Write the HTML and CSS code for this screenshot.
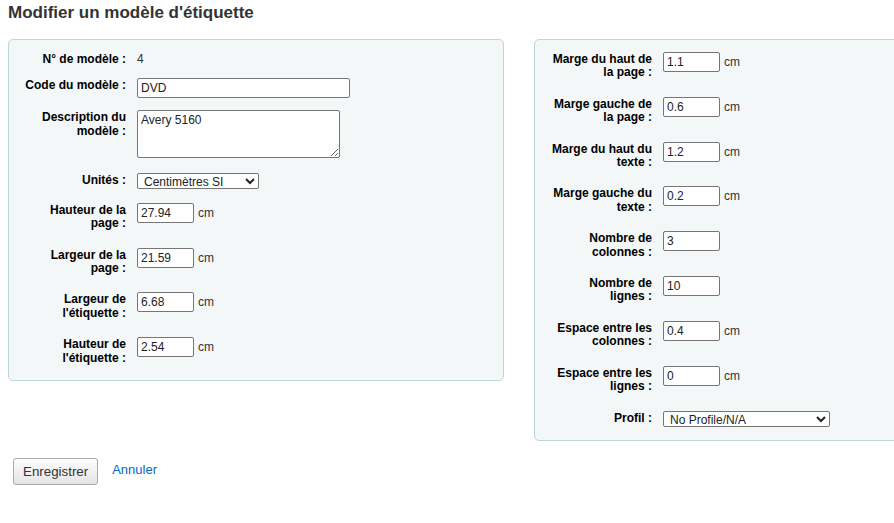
FILE: index.html
```html
<!DOCTYPE html>
<html lang="fr">
<head>
    <meta charset="UTF-8">
    <meta name="viewport" content="width=device-width, initial-scale=1.0">
    <title>Modifier un modèle d'étiquette</title>
    <link rel="stylesheet" href="styles.css">
</head>
<body>
    <div class="page">
        <h1>Modifier un modèle d'étiquette</h1>
        <form class="columns">
            <fieldset class="rows">
                <ol>
                    <li class="static">
                        <span class="label">N° de modèle :</span>
                        <span class="value">4</span>
                    </li>
                    <li>
                        <label for="template_code">Code du modèle :</label>
                        <input type="text" id="template_code" class="wide" value="DVD">
                    </li>
                    <li>
                        <label for="template_desc">Description du modèle :</label>
                        <textarea id="template_desc">Avery 5160</textarea>
                    </li>
                    <li class="short">
                        <label for="units">Unités :</label>
                        <select id="units" class="units">
                            <option>Centimètres SI</option>
                        </select>
                    </li>
                    <li>
                        <label for="page_height">Hauteur de la page :</label>
                        <input type="text" id="page_height" value="27.94"> <span class="unit">cm</span>
                    </li>
                    <li>
                        <label for="page_width">Largeur de la page :</label>
                        <input type="text" id="page_width" value="21.59"> <span class="unit">cm</span>
                    </li>
                    <li>
                        <label for="label_width">Largeur de l'étiquette :</label>
                        <input type="text" id="label_width" value="6.68"> <span class="unit">cm</span>
                    </li>
                    <li>
                        <label for="label_height">Hauteur de l'étiquette :</label>
                        <input type="text" id="label_height" value="2.54"> <span class="unit">cm</span>
                    </li>
                </ol>
            </fieldset>

            <fieldset class="rows">
                <ol>
                    <li>
                        <label for="top_margin">Marge du haut de la page :</label>
                        <input type="text" id="top_margin" value="1.1"> <span class="unit">cm</span>
                    </li>
                    <li>
                        <label for="left_margin">Marge gauche de la page :</label>
                        <input type="text" id="left_margin" value="0.6"> <span class="unit">cm</span>
                    </li>
                    <li>
                        <label for="top_text_margin">Marge du haut du texte :</label>
                        <input type="text" id="top_text_margin" value="1.2"> <span class="unit">cm</span>
                    </li>
                    <li>
                        <label for="left_text_margin">Marge gauche du texte :</label>
                        <input type="text" id="left_text_margin" value="0.2"> <span class="unit">cm</span>
                    </li>
                    <li>
                        <label for="cols">Nombre de colonnes :</label>
                        <input type="text" id="cols" value="3">
                    </li>
                    <li>
                        <label for="rows">Nombre de<br>lignes :</label>
                        <input type="text" id="rows" value="10">
                    </li>
                    <li>
                        <label for="col_gap">Espace entre les colonnes :</label>
                        <input type="text" id="col_gap" value="0.4"> <span class="unit">cm</span>
                    </li>
                    <li>
                        <label for="row_gap">Espace entre les lignes :</label>
                        <input type="text" id="row_gap" value="0"> <span class="unit">cm</span>
                    </li>
                    <li>
                        <label for="profile">Profil :</label>
                        <select id="profile" class="profile">
                            <option>No Profile/N/A</option>
                        </select>
                    </li>
                </ol>
            </fieldset>
        </form>

        <div class="action">
            <button type="button">Enregistrer</button>
            <a href="#" class="cancel">Annuler</a>
        </div>
    </div>
</body>
</html>
```

FILE: styles.css
```css
body {
    margin: 0;
    font-family: 'Liberation Sans', Arial, sans-serif;
    font-size: 12px;
    color: #333;
    background: #fff;
    overflow: hidden;
}
.page {
    padding-left: 8px;
}
h1 {
    font-size: 17px;
    font-weight: bold;
    color: #333;
    margin: 3px 0 16px 0;
}
.columns {
    display: flex;
    gap: 30px;
    overflow: hidden;
}
fieldset.rows {
    flex: 0 0 496px;
    box-sizing: border-box;
    margin: 0;
    padding: 12px 10px 0 16px;
    background: #f3f7f8;
    border: 1px solid #b9d8d9;
    border-radius: 5px;
    align-self: flex-start;
}
fieldset.rows ol {
    list-style: none;
    margin: 0;
    padding: 0;
}
fieldset.rows li {
    display: flex;
    align-items: flex-start;
    padding-bottom: 12px;
}
fieldset.rows li.short {
    padding-bottom: 10px;
}
fieldset.rows li:last-child {
    padding-bottom: 10px;
}
fieldset.rows label,
fieldset.rows .label {
    flex: 0 0 101px;
    margin-right: 11px;
    padding: 1px 0 5px 0;
    text-align: right;
    font-weight: bold;
    line-height: 13.4px;
    color: #000;
}
fieldset.rows li.static .label {
    padding-bottom: 0;
}
.value {
    line-height: 13.4px;
    padding-top: 1px;
}
input[type="text"],
textarea,
select {
    font-family: 'Liberation Sans', Arial, sans-serif;
    font-size: 12px;
    color: #222;
    box-sizing: border-box;
    border: 1px solid #767676;
    border-radius: 2px;
    background: #fff;
    margin: 0;
}
input[type="text"] {
    width: 57px;
    height: 20px;
    padding: 1px 3px;
}
input.wide {
    width: 213px;
}
textarea {
    width: 203px;
    height: 48px;
    padding: 2px 3px;
    margin-bottom: 3px;
    resize: both;
}
select {
    height: 16px;
    padding: 0 2px;
    line-height: 14px;
}
select.units {
    width: 122px;
}
select.profile {
    width: 167px;
}
.unit {
    margin-left: 4px;
    line-height: 20px;
    color: #333;
}
.action {
    display: flex;
    align-items: center;
    gap: 14px;
    padding: 17px 0 0 5px;
}
button {
    font-family: 'Liberation Sans', Arial, sans-serif;
    font-size: 13.33px;
    color: #333;
    height: 27px;
    padding: 0 9px;
    border: 1px solid #aaa;
    border-radius: 3px;
    background: linear-gradient(#fdfdfd, #e4e4e4);
}
a.cancel {
    font-size: 13px;
    color: #006bc0;
    text-decoration: none;
    margin-top: -4px;
}
```
